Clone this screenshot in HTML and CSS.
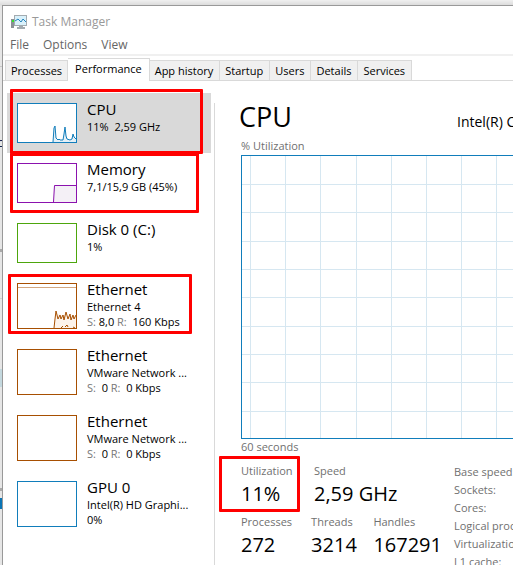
FILE: index.html
```
<!DOCTYPE html>
<html lang="en">
    <head>
        <meta charset="utf-8">
        <title>Task Manager</title>
        <link rel="stylesheet" href="styles.css">
    </head>
    <body>
        <div class="desktop">
            <span class="behind">c</span>
            <div class="window">
                <header class="titlebar">
                    <svg class="app-icon" width="16" height="14" viewBox="0 0 16 14">
                        <rect x="0" y="4" width="3" height="9" fill="#8a9096"/>
                        <rect x="1" y="5" width="2" height="2" fill="#35e02c"/>
                        <rect x="3" y="0" width="13" height="11" fill="#a3abb0"/>
                        <rect x="4" y="1" width="11" height="9" fill="#d9f1fb"/>
                        <path d="M4 6L7 4L10 7L12 4L15 7" fill="none" stroke="#2483bd"/>
                        <path d="M8 11h4v1h2v2H6v-2h2z" fill="#a3abb0"/>
                    </svg>
                    <span>Task Manager</span>
                </header>
                <nav class="menu">
                    <button type="button">File</button>
                    <button type="button">Options</button>
                    <button type="button">View</button>
                </nav>
                <div class="tabs" role="tablist">
                    <button type="button" role="tab">Processes</button>
                    <button type="button" role="tab" class="active" aria-selected="true">Performance</button>
                    <button type="button" role="tab">App history</button>
                    <button type="button" role="tab">Startup</button>
                    <button type="button" role="tab">Users</button>
                    <button type="button" role="tab">Details</button>
                    <button type="button" role="tab">Services</button>
                </div>
                <div class="content">
                    <aside class="sidebar">
                        <button type="button" class="item selected">
                            <svg class="thumb cpu" width="60" height="40" viewBox="0 0 60 40">
                                <path class="area" d="M36 39L37 25L38 23L39 35L41 37H46L48 24L50 36L54 37L56 31L59 36V39z"/>
                                <path class="line" d="M36 39L37 25L38 23L39 35L41 37L42 36L43 37H46L47 31L48 24L49 33L50 36L53 37L55 36L56 31L57 34L59 36"/>
                                <rect class="frame" x=".5" y=".5" width="59" height="39"/>
                            </svg>
                            <span class="info">
                                <span class="name">CPU</span>
                                <span class="value">11%&nbsp; 2,59 GHz</span>
                            </span>
                            <span class="mark mark-cpu"></span>
                        </button>
                        <button type="button" class="item">
                            <svg class="thumb memory" width="60" height="40" viewBox="0 0 60 40">
                                <path class="area" d="M36 39L37 22H60V39z"/>
                                <path class="line" d="M36.500 39L37.500 22.500H60"/>
                                <rect class="frame" x=".5" y=".5" width="59" height="39"/>
                            </svg>
                            <span class="info">
                                <span class="name">Memory</span>
                                <span class="value">7,1/15,9 GB (45%)</span>
                            </span>
                            <span class="mark mark-memory"></span>
                        </button>
                        <button type="button" class="item">
                            <svg class="thumb disk" width="60" height="40" viewBox="0 0 60 40">
                                <rect class="frame" x=".5" y=".5" width="59" height="39"/>
                            </svg>
                            <span class="info">
                                <span class="name">Disk 0 (C:)</span>
                                <span class="value">1%</span>
                            </span>
                        </button>
                        <button type="button" class="item">
                            <svg class="thumb net" width="60" height="46" viewBox="0 0 60 46">
                                <path class="limit" d="M1 4.500H59"/>
                                <path class="area" d="M37 45L39 31L59 34V45z"/>
                                <path class="line" d="M37 45L38 36L39 28L41 36L43 32L44 36L46 32L47 37L49 29L51 36L53 31L54 37L56 32L57 36L59 32"/>
                                <path class="dashes" d="M44 45L46 43M48 44L50 42L51 44M56 44L58 45"/>
                                <rect class="frame" x=".5" y=".5" width="59" height="45"/>
                            </svg>
                            <span class="info">
                                <span class="name">Ethernet</span>
                                <span class="value">Ethernet 4</span>
                                <span class="value"><i>S:</i> 8,0 <i>R:</i>&nbsp; 160 Kbps</span>
                            </span>
                            <span class="mark mark-net"></span>
                        </button>
                        <button type="button" class="item">
                            <svg class="thumb net" width="60" height="46" viewBox="0 0 60 46">
                                <rect class="frame" x=".5" y=".5" width="59" height="45"/>
                            </svg>
                            <span class="info">
                                <span class="name">Ethernet</span>
                                <span class="value">VMware Network ...</span>
                                <span class="value"><i>S:</i>&nbsp; 0 <i>R:</i>&nbsp; 0 Kbps</span>
                            </span>
                        </button>
                        <button type="button" class="item">
                            <svg class="thumb net" width="60" height="46" viewBox="0 0 60 46">
                                <rect class="frame" x=".5" y=".5" width="59" height="45"/>
                            </svg>
                            <span class="info">
                                <span class="name">Ethernet</span>
                                <span class="value">VMware Network ...</span>
                                <span class="value"><i>S:</i>&nbsp; 0 <i>R:</i>&nbsp; 0 Kbps</span>
                            </span>
                        </button>
                        <button type="button" class="item">
                            <svg class="thumb cpu" width="60" height="46" viewBox="0 0 60 46">
                                <rect class="frame" x=".5" y=".5" width="59" height="45"/>
                            </svg>
                            <span class="info">
                                <span class="name">GPU 0</span>
                                <span class="value">Intel(R) HD Graphi...</span>
                                <span class="value">0%</span>
                            </span>
                        </button>
                    </aside>
                    <main class="details">
                        <div class="heading">
                            <h1>CPU</h1>
                            <span class="model">Intel(R) Core(TM)</span>
                        </div>
                        <div class="caption">% Utilization</div>
                        <svg class="chart" width="100%" height="284">
                            <defs>
                                <pattern id="grid" x="8" width="176" height="284" patternUnits="userSpaceOnUse">
                                    <path d="M.5 0V284M35.500 0V284M70.500 0V284M106.500 0V284M141.500 0V284M0 28.500H176M0 56.500H176M0 85.500H176M0 113.500H176M0 141.500H176M0 170.500H176M0 198.500H176M0 226.500H176M0 255.500H176" stroke="#d6e7f1"/>
                                </pattern>
                            </defs>
                            <rect width="100%" height="284" fill="url(#grid)"/>
                        </svg>
                        <div class="caption">60 seconds</div>
                        <div class="stats">
                            <div class="live">
                                <dl class="row">
                                    <div class="stat utilization"><dt>Utilization</dt><dd>11%</dd><span class="mark mark-util"></span></div>
                                    <div class="stat"><dt>Speed</dt><dd>2,59 GHz</dd></div>
                                </dl>
                                <dl class="row">
                                    <div class="stat processes"><dt>Processes</dt><dd>272</dd></div>
                                    <div class="stat threads"><dt>Threads</dt><dd>3214</dd></div>
                                    <div class="stat"><dt>Handles</dt><dd>167291</dd></div>
                                </dl>
                            </div>
                            <ul class="specs">
                                <li>Base speed:</li>
                                <li>Sockets:</li>
                                <li>Cores:</li>
                                <li>Logical processors:</li>
                                <li>Virtualization:</li>
                                <li>L1 cache:</li>
                            </ul>
                        </div>
                    </main>
                </div>
            </div>
        </div>
    </body>
</html>
```
FILE: styles.css
```
* {
    box-sizing: border-box;
}
body {
    margin: 0;
    font-family: "Open Sans", "Noto Sans", sans-serif;
    font-size: 12px;
    line-height: 16px;
    color: #000;
    overflow: hidden;
}
button {
    font: inherit;
    color: inherit;
    border: none;
    background: none;
    padding: 0;
    margin: 0;
    text-align: left;
}

/* whatever is open behind the window shows on the left edge */
.desktop {
    position: relative;
    height: 100vh;
    padding: 5px 0 0 2px;
    background:
        linear-gradient(#c8c8c8, #c8c8c8) 0 66px / 2px 1px no-repeat,
        linear-gradient(#aaa, #aaa) 0 249px / 2px 3px no-repeat,
        linear-gradient(#d0d0d0, #d0d0d0) 0 298px / 2px 1px no-repeat,
        linear-gradient(#c4d8de, #c4d8de) 0 369px / 2px 18px no-repeat,
        linear-gradient(#aaa, #aaa) 0 488px / 2px 3px no-repeat,
        linear-gradient(#0a74b4, #0a74b4) 0 498px / 2px 11px no-repeat,
        linear-gradient(#f0f0f0, #dcdcdc 5px, #e6e6e6 6px);
    overflow: hidden;
}
.behind {
    position: absolute;
    top: 135px;
    left: -3px;
    color: #124;
}
.window {
    position: relative;
    min-height: 100%;
    background: #fff;
    border-top: 1px solid #999;
    border-left: 1px solid #999;
}

.titlebar {
    display: flex;
    align-items: center;
    gap: 5px;
    height: 31px;
    padding-left: 8px;
    color: #999;
}
.menu {
    display: flex;
    align-items: flex-start;
    gap: 14px;
    height: 19px;
    padding-left: 7px;
    border-bottom: 2px solid #f0f0f0;
    color: #666;
}

.tabs {
    display: flex;
    align-items: flex-end;
    height: 25px;
    padding-left: 2px;
    border-bottom: 1px solid #d9d9d9;
    font-size: 11px;
}
.tabs button {
    height: 20px;
    padding: 0 6px 0 5px;
    background: #f0f0f0;
    border: 1px solid #d9d9d9;
    border-bottom: none;
    border-left: none;
    white-space: nowrap;
}
.tabs button:first-child {
    padding-right: 5px;
    border-left: 1px solid #d9d9d9;
}
.tabs .active {
    height: 23px;
    margin-bottom: -1px;
    padding: 0 7px 2px;
    background: #fff;
}

.content {
    display: flex;
    padding-top: 12px;
}
.sidebar {
    flex: none;
    width: 212px;
    padding: 0 4px;
    background: linear-gradient(#d9d9d9, #d9d9d9) right 10px / 1px 100% no-repeat;
}
.item {
    position: relative;
    display: flex;
    gap: 10px;
    width: 100%;
    padding: 10px;
}
.item.selected {
    background: #d9d9d9;
}
.info {
    display: flex;
    flex-direction: column;
    font-size: 11px;
    line-height: 15px;
    white-space: nowrap;
}
.name {
    font-size: 15px;
    line-height: 20px;
    margin-top: -4px;
}
.value i {
    font-style: normal;
    color: #777;
}

.thumb {
    flex: none;
    background: #fff;
}
.frame,
.line,
.limit,
.dashes {
    fill: none;
    stroke: currentColor;
}
.cpu {
    color: #117dbb;
}
.memory {
    color: #8b12ae;
}
.disk {
    color: #4da60c;
}
.net {
    color: #a74f01;
}
.cpu .area {
    fill: #e4f0f7;
}
.memory .area {
    fill: #f4f0f6;
}
.net .area {
    fill: #fcf3eb;
}
.limit {
    opacity: .5;
}

/* red highlight boxes */
.mark {
    position: absolute;
    border: 3px solid #f00;
    border-radius: 1px;
    pointer-events: none;
    z-index: 1;
}
.mark-cpu {
    inset: -4px 8px -1px 3px;
}
.mark-memory {
    inset: 0 12px 0 3px;
}
.mark-net {
    inset: 1px 19px 5px 1px;
}
.mark-util {
    inset: -7px 14px -4px -22px;
}

.details {
    flex: 1;
    min-width: 0;
    padding: 8px 0 0 26px;
    overflow: hidden;
}
.heading {
    display: flex;
    align-items: baseline;
    justify-content: space-between;
    height: 37px;
    white-space: nowrap;
}
.heading h1 {
    margin: 0 0 0 -2px;
    font-size: 27px;
    line-height: 32px;
    font-weight: normal;
}
.model {
    width: 56px;
    font-size: 14px;
}
.caption {
    height: 17px;
    font-size: 11px;
    color: #707070;
}
.chart {
    display: block;
    border: 1px solid #117dbb;
    border-right: none;
}

.stats {
    display: flex;
    gap: 12px;
    padding-top: 7px;
    color: #707070;
}
.live {
    flex: none;
    width: 201px;
}
.row {
    display: flex;
    margin: 0 0 6px;
}
.stat {
    position: relative;
    font-size: 11px;
}
.stat dd {
    margin: 1px 0 0;
    font-size: 20px;
    line-height: 28px;
    color: #000;
}
.utilization {
    width: 73px;
}
.processes {
    width: 72px;
}
.threads {
    width: 64px;
}
.specs {
    margin: 0;
    padding: 0;
    list-style: none;
    font-size: 11px;
    line-height: 18px;
    white-space: nowrap;
}
```
